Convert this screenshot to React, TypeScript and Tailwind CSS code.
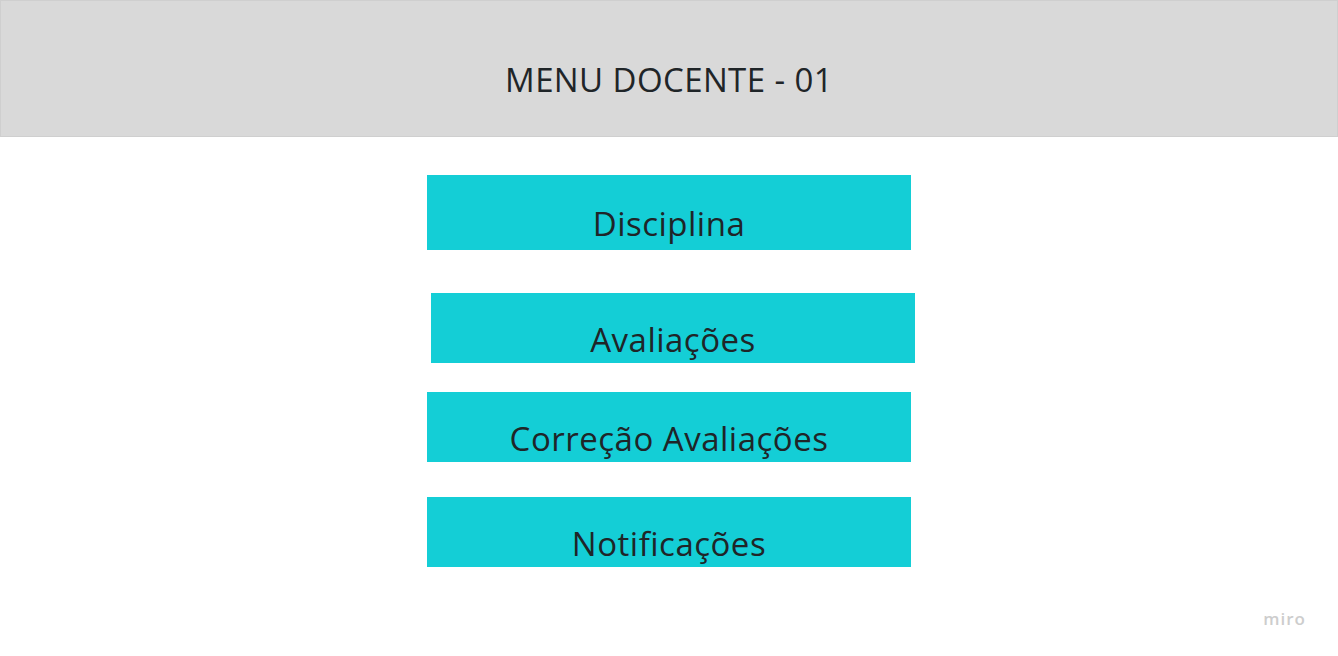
const items = [
  { label: "Disciplina", box: "h-[75px] mt-[38px]", pad: "pt-[29px]" },
  { label: "Avaliações", box: "h-[70px] mt-[43px] ml-[4px]", pad: "pt-[27px]" },
  { label: "Correção Avaliações", box: "h-[70px] mt-[29px]", pad: "pt-[27px]" },
  { label: "Notificações", box: "h-[70px] mt-[35px]", pad: "pt-[27px]" },
];

export default function App() {
  return (
    <div
      className="relative min-h-[656px] w-full bg-white text-[#1f2528]"
      style={{ fontFamily: '"Open Sans", "Noto Sans", sans-serif' }}
    >
      <header className="flex h-[137px] items-center justify-center border border-[#cfcfcf] bg-[#d9d9d9] pt-[22px]">
        <h1 className="text-[33px] font-normal leading-[40px] tracking-[0.4px]">
          MENU DOCENTE - 01
        </h1>
      </header>

      <nav className="mx-auto flex w-[484px] flex-col items-start">
        {items.map((item) => (
          <button
            key={item.label}
            className={`flex w-[484px] justify-center bg-[#14ced6] ${item.box} ${item.pad}`}
          >
            <span className="text-[33px] leading-[40px] tracking-[0.5px]">
              {item.label}
            </span>
          </button>
        ))}
      </nav>

      <span className="absolute right-[32px] top-[606px] text-[17px] font-semibold tracking-[1px] text-[#cdcdcd]">
        miro
      </span>
    </div>
  );
}
